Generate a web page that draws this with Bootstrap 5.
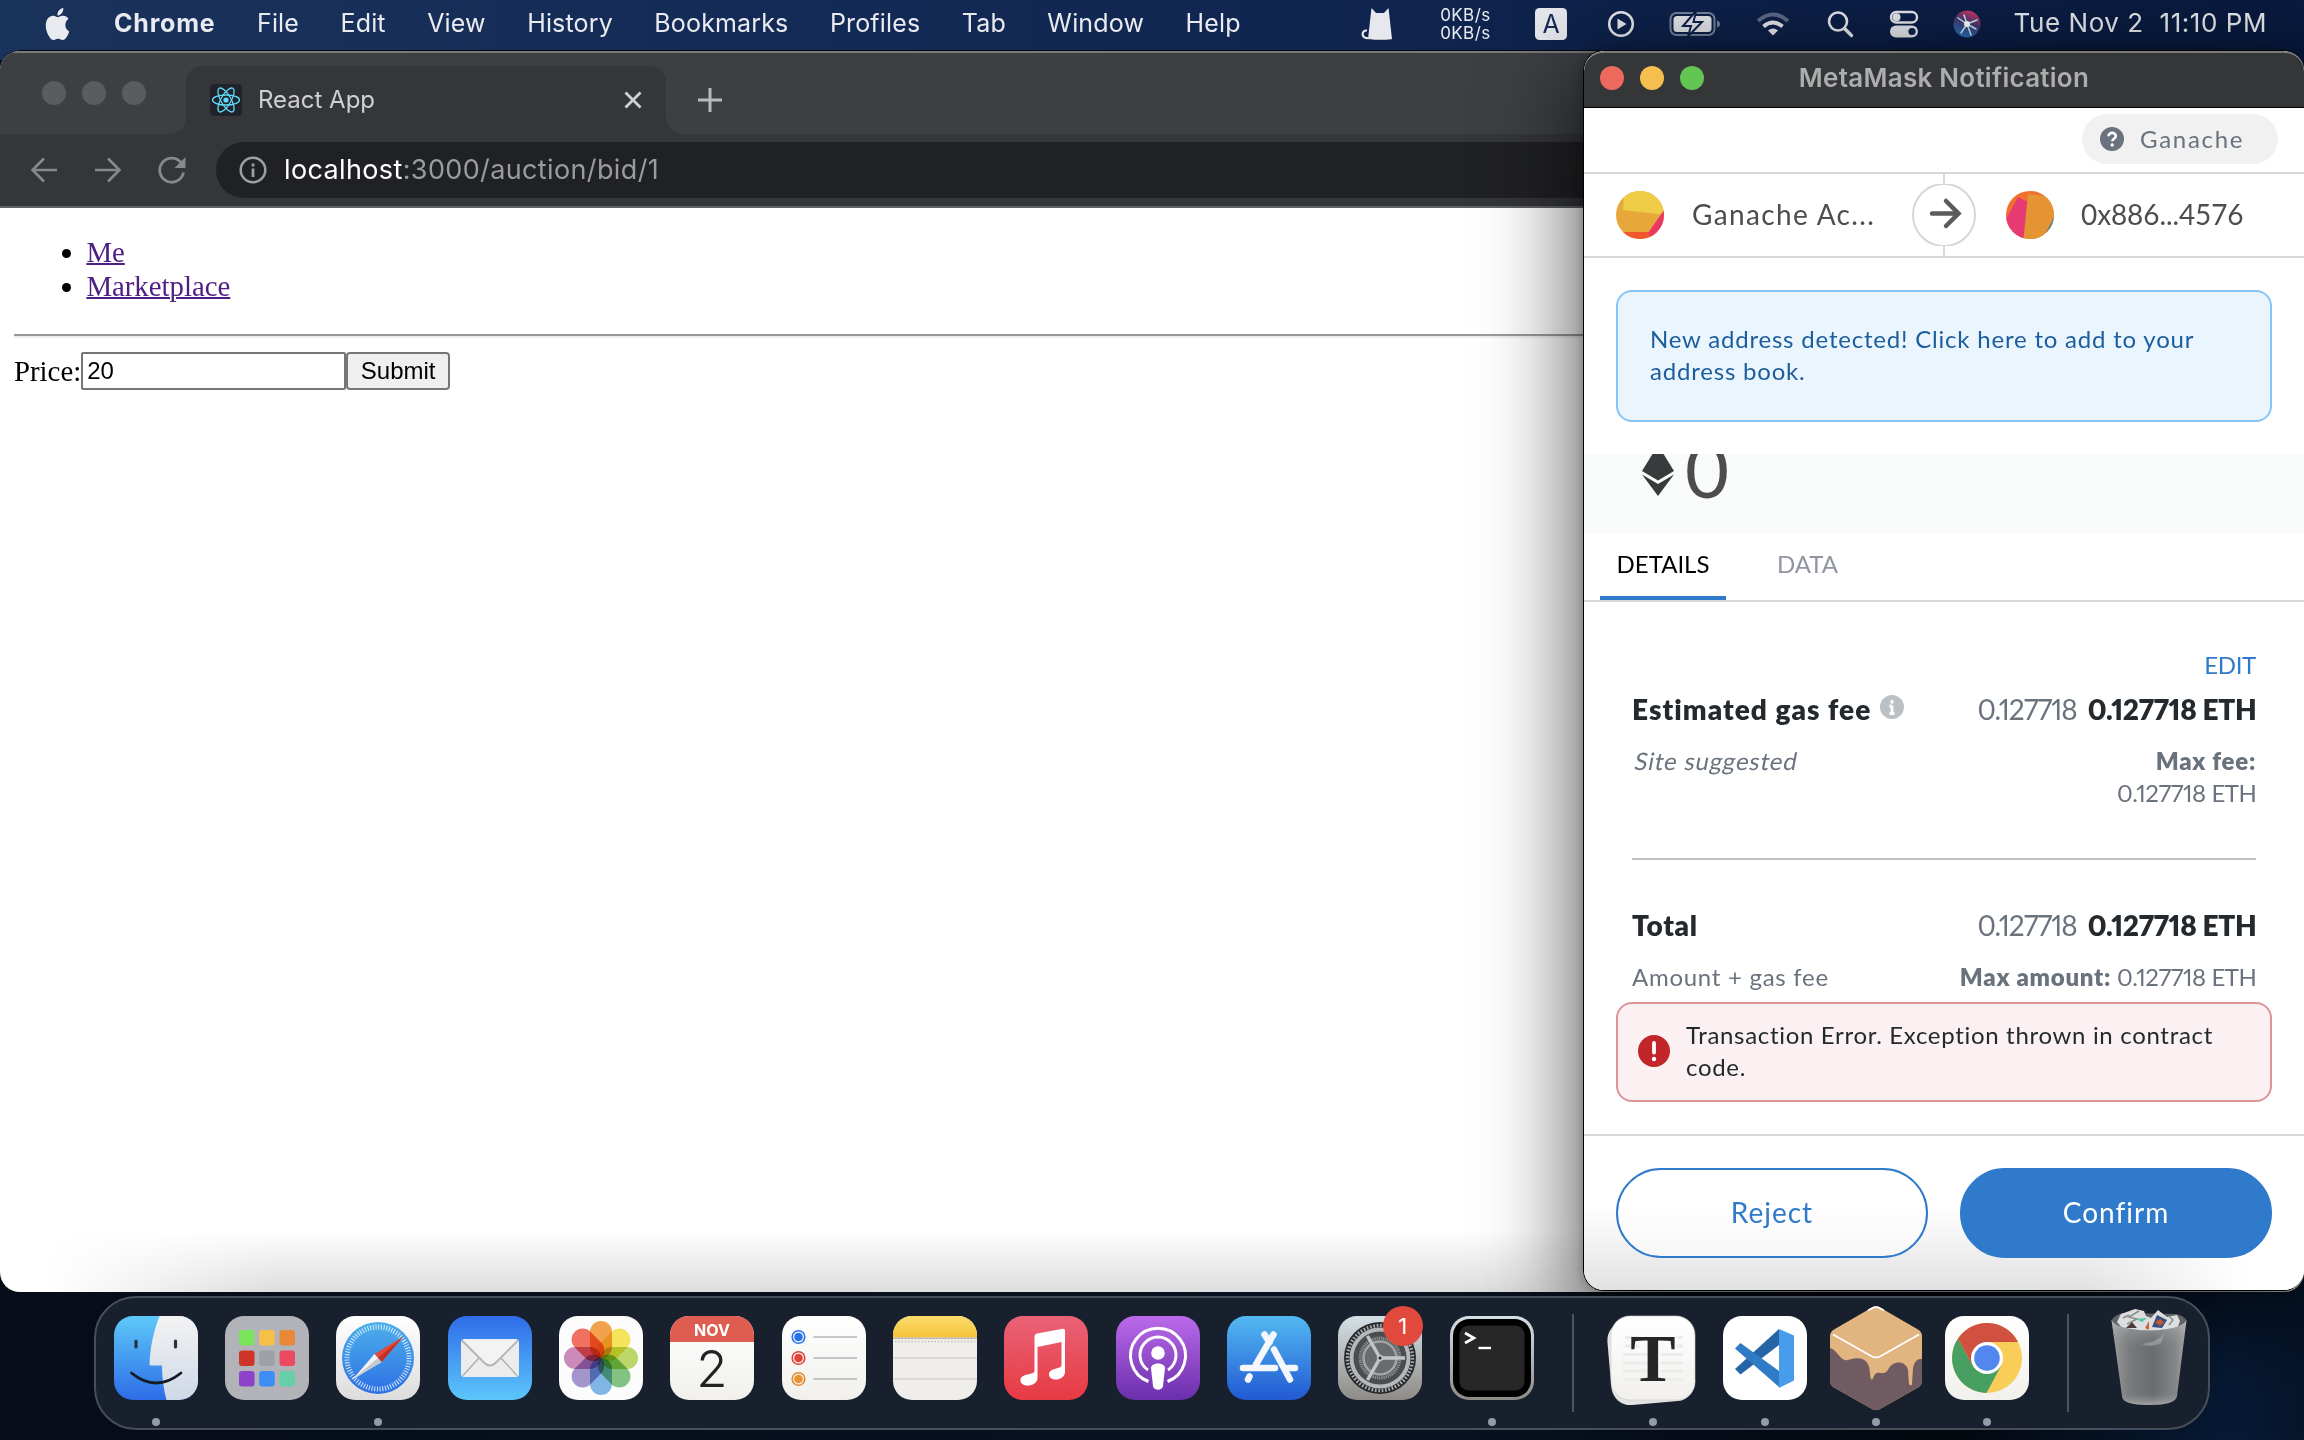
<!DOCTYPE html>
<html lang="en">
<head>
<meta charset="utf-8">
<title>Desktop</title>
<link href="https://cdn.jsdelivr.net/npm/bootstrap@5.3.0/dist/css/bootstrap.min.css" rel="stylesheet">
<style>
html,body{margin:0;height:100%;overflow:hidden}
body{font-family:Inter,"Liberation Sans",sans-serif;background:#06101f}
svg{display:block;flex:none}
.desktop{width:2304px;height:1440px;overflow:hidden;background:linear-gradient(90deg,#060c18 0,#081222 60%,#04080f 85%,#071a35 97%,#06152b 100%)}
.t{white-space:pre}
/* menu bar */
.menubar{height:60px;padding:0 37px 12px 44px;background:linear-gradient(90deg,#1a335b 0,#142b57 30%,#0f254f 60%,#0b1e45 85%,#081a3e 100%);color:#e9ebf0;font-size:25px}
.menus{gap:41.5px;letter-spacing:.15px}
.menus .brand{font-weight:700;letter-spacing:.8px;margin-left:1.500px}
.clock{letter-spacing:.56px;font-size:26px;line-height:36px;padding-bottom:2px}
.netspeed{font-size:17px;line-height:18px;letter-spacing:.4px}
/* windows */
.win{position:absolute}
.browser{left:0;top:50px;width:2304px;height:1242px;border-radius:20px;background:#fff;border-top:1px solid #05080f;overflow:hidden}
.tabstrip{height:83px;background:#3c4043;border-top:2px solid #77797b;padding-left:42px}
.dots{gap:16px}
.dots i{width:24px;height:24px;border-radius:50%;background:#5a5d5f}
.tabx{width:480px;height:68px;background:#35363a;border-radius:16px 16px 0 0;padding:0 24px;color:#cfd0d2;font-size:24px;position:relative}
.tabx::before,.tabx::after{content:"";position:absolute;bottom:0;width:16px;height:16px}
.tabx::before{left:-16px;background:radial-gradient(circle at 0 0,transparent 15.5px,#35363a 16px)}
.tabx::after{right:-16px;background:radial-gradient(circle at 100% 0,transparent 15.5px,#35363a 16px)}
.toolbarx{height:74px;background:#35363a;border-bottom:2px solid #5f6164;padding-left:30px}
.omni{height:56px;border-radius:28px;background:#202124;color:#9a9b9e;font-size:27px;padding-left:23px;letter-spacing:.37px}
.omni b{font-weight:400;color:#fff}
.pagex{font:28.8px/34px "Liberation Serif",serif;color:#000;padding:27px 14px}
.pagex ul{padding-left:72.400px;margin:0 0 31px}
.pagex a{color:#4d1f82;text-decoration:underline;text-decoration-thickness:2px}
.rule{height:4px;border-top:2px solid #9a9a9a;background:#eee}
.pricein{width:265px;height:38px;border:2px solid #767676;border-radius:2px;font:24px "Liberation Sans",sans-serif;padding:0 4px;color:#000;background:#fff}
.submitx{width:104px;height:38px;border:2px solid #767676;border-radius:4px;font:24px "Liberation Sans",sans-serif;padding:0;background:#efefef;color:#000}
.footshade{position:absolute;left:0;right:0;bottom:0;height:62px;background:linear-gradient(#fff0,#0002);-webkit-mask-image:linear-gradient(90deg,transparent 2%,#000 12%,#000 100%)}
/* wallet window */
.wallet{left:1583px;top:50px;width:721px;height:1241px;border-radius:21px;background:#fff;border:1px solid #000;border-right:0;box-shadow:0 26px 90px 10px rgba(0,0,0,.62),0 0 10px rgba(0,0,0,.25);overflow:hidden;font-family:Lato,"Liberation Sans",sans-serif;font-size:24px;line-height:32px;color:#24292e;font-variant-ligatures:none}
.wallet b{font-weight:800}
.wtitle{height:57px;background:#353638;border-top:2px solid #78797a;border-bottom:1px solid #000;color:#acadae;font:600 26px/1 Inter,sans-serif;letter-spacing:.26px;border-radius:20px 20px 0 0;padding-bottom:5px}
.wtitle .dots{left:16px;top:13px;position:absolute}
.line-b{border-bottom:2px solid #d6d9dc}
.netrow{height:66px;padding:6px 26px 0 0}
.pill{height:50px;width:196px;border-radius:25px;background:#f1f1f2;color:#6a737d;padding-left:18px}
.sender{height:84px;font-size:28px;color:#4d4d4d;padding-left:32px}
.newaddr{margin:32px;height:132px;border:2px solid #86c4f8;border-radius:16px;background:#eaf5fe;color:#1c5d9e;padding:31px 32px;letter-spacing:.8px}
.band{height:80px;background:#f9fafa;overflow:hidden;padding-left:58px}
.bignum{font-size:76px;line-height:76px;color:#4d4d4d}
.tabsx{height:68px;padding-left:16px;color:#9095a0}
.tabsx div{height:66px;line-height:60px}
.tabsx .on{width:126px;color:#000;border-bottom:4px solid #2f7acb}
.det{padding:47px 48px 0}
.big{font-size:28px;line-height:40px}
.gray{color:#6a737d}
.blue{color:#2f7acb}
.slant{font-style:normal;display:inline-block;transform:skewX(-11deg);letter-spacing:.75px}
.num{font-variant-numeric:proportional-nums;letter-spacing:-.45px;margin-right:-.45px}
.big .num{letter-spacing:-1.050px;margin-right:-1.050px}
.big b.num{letter-spacing:-.34px;margin-right:-.34px}
.lsb{letter-spacing:1.050px}
.lss{letter-spacing:.72px}
.err{margin:9px 32px 32px;height:100px;border:2px solid #df9298;border-radius:16px;background:#fbf1f2;padding:0 0 2px 20px}
.foot{border-top:2px solid #d6d9dc;height:156px;padding:32px;background:linear-gradient(90deg,#fff0 70%,#fff 92%),linear-gradient(#fff 0,#fff 45%,#e2e2e2 100%)}
.foot .btn{width:312px;height:90px;border-radius:45px;font-size:28px;border:2px solid #2f7acb;line-height:40px;letter-spacing:1px;padding:0 0 2px}
.foot .btn-a{color:#2f7acb;background:#fff8}
.foot .btn-b{color:#fff;background:#2f7acb;margin-left:32px}
/* dock */
.dock{left:94px;top:1296px;width:2116px;height:134px;border-radius:42px;border:2px solid #474e59;background:#18202e;padding-left:4px}
.slot{width:111.33px;padding-top:18px;position:relative}
.slot.run::after{content:"";position:absolute;left:50%;margin-left:-4px;top:120px;width:8px;height:8px;border-radius:50%;background:#949cac}
.sep{width:50.5px}
.sep i{display:block;width:2px;height:98px;margin:16px auto 0;background:#4c5461}
.badgex{position:absolute;left:58px;top:8px;width:40px;height:40px;border-radius:50%;background:#e2493d;color:#fff;font-size:22px;line-height:40px;text-align:center}
</style>
<script src="https://cdn.jsdelivr.net/npm/bootstrap@5.3.0/dist/js/bootstrap.bundle.min.js"></script>
</head>
<body>
<div class="desktop position-relative">
 <div class="menubar d-flex align-items-center justify-content-between">
  <div class="menus d-flex align-items-center">
   <svg width="27" height="32" viewBox="0.5 0 15 16" preserveAspectRatio="none" fill="#e9ebf0"><path d="M11.182.008C11.148-.03 9.923.023 8.857 1.18c-1.066 1.156-.902 2.482-.878 2.516s1.52.087 2.475-1.258.762-2.391.728-2.43m3.314 11.733c-.048-.096-2.325-1.234-2.113-3.422s1.675-2.789 1.698-2.854-.597-.79-1.254-1.157a3.7 3.7 0 0 0-1.563-.434c-.108-.003-.483-.095-1.254.116-.508.139-1.653.589-1.968.607-.316.018-1.256-.522-2.267-.665-.647-.125-1.333.131-1.824.328-.49.196-1.422.754-2.074 2.237-.652 1.482-.311 3.83-.067 4.56s.625 1.924 1.273 2.796c.576.984 1.34 1.667 1.659 1.899s1.219.386 1.843.067c.502-.308 1.408-.485 1.766-.472.357.013 1.061.154 1.782.539.571.197 1.111.115 1.652-.105.541-.221 1.324-1.059 2.238-2.758q.52-1.185.473-1.282"/></svg>
   <span class="t brand">Chrome</span><span class="t">File</span><span class="t">Edit</span><span class="t">View</span><span class="t">History</span><span class="t">Bookmarks</span><span class="t">Profiles</span><span class="t">Tab</span><span class="t">Window</span><span class="t">Help</span>
  </div>
  <div class="d-flex align-items-center">
   <svg width="34" height="34" viewBox="0 0 34 34" fill="#e6e8ed"><path d="M10.500 1L15 6h8l4.500-5 3.500 31c-1 1-22 1-24 0z"/><path d="M7 31C0 32 0 23 6 23.500" fill="none" stroke="#e6e8ed" stroke-width="2.200"/></svg>
   <div class="netspeed" style="margin-left:45px"><div class="t">0KB/s</div><div class="t">0KB/s</div></div>
   <svg style="margin-left:43px" width="34" height="34" viewBox="0 0 34 34"><rect x="1" y="1" width="32" height="32" rx="4.500" fill="#e6e8ed"/><text x="17" y="26" text-anchor="middle" font-family="Inter" font-size="25" fill="#142a55">A</text></svg>
   <svg style="margin-left:38px" width="30" height="30" viewBox="0 0 30 30"><circle cx="15" cy="15" r="11.800" fill="none" stroke="#e6e8ed" stroke-width="2.500"/><path d="M11.500 9.500l9 5.500-9 5.500z" fill="#e6e8ed"/></svg>
   <svg style="margin-left:33px" width="52" height="30" viewBox="0 0 52 30"><rect x="1.500" y="4" width="44" height="22" rx="6" fill="none" stroke="#78839b" stroke-width="2"/><path d="M48 11.500c4 1 4 6 0 7z" fill="#78839b"/><rect x="4.500" y="7" width="38" height="16" rx="3.500" fill="#e6e8ed"/><path d="M26.500 2.500L14 17h8l-3 10.500L33 13h-8.500l2.500-10.500z" fill="#e6e8ed" stroke="#0e224c" stroke-width="2"/></svg>
   <svg style="margin-left:35px" width="34" height="30" viewBox="0 0 34 30" fill="none" stroke-width="4"><path d="M2 12Q17-1 32 12" stroke="#5d6a87"/><path d="M7.500 17.500q9.500-8 19 0" stroke="#e6e8ed"/><path d="M17 26.500l-5-5q5-4 10 0z" fill="#e6e8ed"/></svg>
   <svg style="margin-left:36px" width="28" height="30" viewBox="0 0 28 30" fill="none" stroke="#e6e8ed" stroke-width="2.600"><circle cx="12" cy="12.500" r="9"/><path d="M18.500 19.500l7 7" stroke-width="3.500" stroke-linecap="round"/></svg>
   <svg style="margin-left:35px" width="30" height="30" viewBox="0 0 30 30"><rect x="2" y="3" width="26" height="10.500" rx="5.200" fill="none" stroke="#e6e8ed" stroke-width="2.400"/><circle cx="7.500" cy="8.200" r="4" fill="#e6e8ed"/><rect x="1" y="16.500" width="28" height="12" rx="6" fill="#e6e8ed"/><circle cx="23" cy="22.500" r="3.600" fill="#0e224c"/></svg>
   <svg style="margin-left:34px" width="28" height="28" viewBox="0 0 28 28"><defs><linearGradient id="siri" x1="0.700" x2="0.300" y2="1"><stop offset="0" stop-color="#d5386b"/><stop offset=".45" stop-color="#44356d"/><stop offset="1" stop-color="#2676c0"/></linearGradient></defs><circle cx="14" cy="14" r="13.500" fill="url(#siri)"/><path d="M14 14L5 8M14 14l10-4M14 14l4 11M14 14L8 23M14 14l-3-9M14 14l9 5" stroke="#b9eef5" stroke-width="1.500" stroke-linecap="round"/><circle cx="14" cy="14" r="3" fill="#fff"/></svg>
   <span class="t clock" style="margin-left:33px">Tue Nov 2  11:10 PM</span>
  </div>
 </div>

 <div class="win browser">
  <div class="tabstrip d-flex">
   <div class="dots d-flex" style="padding-top:28px"><i></i><i></i><i></i></div>
   <div class="tabx d-flex align-items-center align-self-end" style="margin-left:40px">
    <svg width="32" height="32" viewBox="0 0 32 32"><rect width="32" height="32" rx="4" fill="#20232a"/><g fill="none" stroke="#61dafb" stroke-width="1.300"><ellipse cx="16" cy="16" rx="13.500" ry="5"/><ellipse cx="16" cy="16" rx="13.500" ry="5" transform="rotate(60 16 16)"/><ellipse cx="16" cy="16" rx="13.500" ry="5" transform="rotate(120 16 16)"/></g><circle cx="16" cy="16" r="2.600" fill="#61dafb"/></svg>
    <span class="t" style="margin-left:16px">React App</span>
    <svg class="ms-auto" width="18" height="18" viewBox="0 0 18 18" stroke="#d0d1d3" stroke-width="2.800"><path d="M1.500 1.500l15 15M16.500 1.500l-15 15"/></svg>
   </div>
   <svg class="align-self-end" style="margin:0 0 22px 32px" width="24" height="24" viewBox="0 0 24 24" stroke="#b9babc" stroke-width="3"><path d="M12 0v24M0 12h24"/></svg>
  </div>
  <div class="toolbarx d-flex align-items-center">
   <svg width="28" height="26" viewBox="0 0 28 26" fill="none" stroke="#87888a" stroke-width="2.600"><path d="M27 13H3M14 1.500L2.500 13 14 24.500"/></svg>
   <svg style="margin-left:36px" width="28" height="26" viewBox="0 0 28 26" fill="none" stroke="#87888a" stroke-width="2.600"><path d="M1 13h24M14 1.500L25.500 13 14 24.500"/></svg>
   <svg style="margin-left:36px" width="28" height="28" viewBox="0 0 28 28" fill="none" stroke="#87888a" stroke-width="2.800"><path d="M25.500 16.500A12 12 0 1 1 22.500 6L25 9"/><path d="M27.500 1v11h-11z" fill="#87888a" stroke="none"/></svg>
   <div class="omni d-flex align-items-center flex-fill" style="margin-left:30px">
    <svg width="28" height="28" viewBox="0 0 28 28"><circle cx="14" cy="14" r="12.300" fill="none" stroke="#9aa0a6" stroke-width="2.500"/><path d="M14 12.500v8.500M14 7.500v3" stroke="#9aa0a6" stroke-width="2.800"/></svg>
    <span class="t" style="margin-left:17px"><b>localhost</b>:3000/auction/bid/1</span>
   </div>
  </div>
  <div class="pagex">
   <ul><li><a href="#">Me</a></li><li><a href="#">Marketplace</a></li></ul>
   <div class="rule"></div>
   <div class="d-flex align-items-center" style="margin-top:14px"><span>Price:</span><input class="pricein" value="20"><button class="submitx">Submit</button></div>
  </div>
  <div class="footshade"></div>
 </div>

 <div class="win wallet">
  <div class="wtitle d-flex align-items-center justify-content-center position-relative">
   <div class="dots d-flex"><i style="background:#ee6a5f"></i><i style="background:#f5bf4f"></i><i style="background:#62c554"></i></div>
   <span class="t">MetaMask Notification</span>
  </div>
  <div class="netrow line-b d-flex justify-content-end">
   <div class="pill d-flex align-items-center">
    <svg width="24" height="24" viewBox="0 0 24 24"><circle cx="12" cy="12" r="12" fill="#6a737d"/><path d="M8.500 9.300c0-4.700 7.300-4.500 7.300-.2 0 2.700-3.500 2.700-3.500 5.200" fill="none" stroke="#fff" stroke-width="2.600"/><circle cx="12.200" cy="18" r="1.700" fill="#fff"/></svg>
    <span class="t" style="margin-left:16px;letter-spacing:1.7px">Ganache</span>
   </div>
  </div>
  <div class="sender line-b d-flex align-items-center">
   <svg width="48" height="48" viewBox="0 0 48 48"><clipPath id="av"><circle cx="24" cy="24" r="24"/></clipPath><g clip-path="url(#av)"><path fill="#e8a73b" d="M0 0h48v48H0z"/><path fill="#eecc45" d="M8 0h40v22l-2 1.500L7 19z"/><path fill="#f0582b" d="M0 41h48v7H0z"/><path fill="#ea3864" d="M48 19L32 42l5 6h11z"/></g></svg>
   <span class="t" style="margin-left:28px;width:220px;padding-bottom:3px;letter-spacing:1.350px">Ganache Ac...</span>
   <div class="d-flex flex-column align-items-center" style="height:82px"><i style="width:2px;height:10px;background:#d6d9dc"></i>
    <svg width="64" height="62" viewBox="0 1 64 62"><circle cx="32" cy="32" r="31" fill="#fff" stroke="#d2d7db" stroke-width="2"/><path d="M20 30.500h26M34 18l12.500 12.500L34 43" fill="none" stroke="#5b5b5b" stroke-width="4.500" stroke-linecap="round"/></svg>
    <i style="width:2px;height:10px;background:#d6d9dc"></i></div>
   <svg style="margin-left:30px" width="48" height="48" viewBox="0 0 48 48"><g clip-path="url(#av)"><path fill="#f07030" d="M0 0h48v48H0z"/><path fill="#e83a72" d="M12 6l10 5-4 37H0V28z"/><path fill="#e59434" d="M22 3l26 3v20L36 48H17.500z"/><path fill="#4a9180" d="M48 26v16h-8z"/></g></svg>
   <span class="t" style="margin-left:27px;padding-bottom:3px;letter-spacing:-.1px">0x886...4576</span>
  </div>
  <div class="newaddr"><span class="t">New address detected! Click here to add to your<br>address book.</span></div>
  <div class="band d-flex align-items-start">
   <svg width="32" height="42" viewBox="0 0 32 42" fill="#383a3c"><path d="M10.500 0h11L32 17 16 26.500 0 17z"/><path d="M0 20.500L16 30l16-9.500L16 42z"/></svg>
   <span class="bignum" style="margin:-23px 0 0 11px">0</span>
  </div>
  <div class="tabsx line-b d-flex"><div class="on text-center"><span class="t">DETAILS</span></div><div style="margin-left:51px"><span class="t">DATA</span></div></div>
  <div class="det">
   <div class="text-end blue"><span class="t" style="letter-spacing:-.3px">EDIT</span></div>
   <div class="big d-flex align-items-center" style="margin-top:8px"><b class="t lsb">Estimated gas fee</b>
    <svg style="margin:0 0 4px 9px" width="24" height="24" viewBox="0 0 24 24"><circle cx="12" cy="12" r="12" fill="#bbc0c5"/><path d="M12 10.500V19M12 5v3.500M9.500 18.500h5M9.500 11h2" stroke="#fff" stroke-width="2.800"/></svg>
    <span class="gray t ms-auto num">0.127718</span><b class="t num" style="margin-left:12px">0.127718 ETH</b></div>
   <div class="d-flex justify-content-between gray" style="margin-top:16px"><i class="t slant">Site suggested</i><div class="text-end"><b class="t lss">Max fee:</b><br><span class="t num">0.127718 ETH</span></div></div>
   <div style="height:2px;background:#bbc0c5;margin-top:49px"></div>
   <div class="big d-flex" style="margin-top:45px"><b class="t lss">Total</b><span class="gray t ms-auto num">0.127718</span><b class="t num" style="margin-left:12px">0.127718 ETH</b></div>
   <div class="d-flex gray" style="margin-top:16px"><span class="t lss">Amount + gas fee</span><b class="t ms-auto lss">Max amount:</b><span class="t num" style="margin-left:6px">0.127718 ETH</span></div>
  </div>
  <div class="err d-flex align-items-center">
   <svg width="32" height="32" viewBox="0 0 32 32"><circle cx="16" cy="16" r="16" fill="#c3262a"/><path d="M16 8v9.500" stroke="#fff" stroke-width="3.800" stroke-linecap="round"/><circle cx="16" cy="24" r="2.200" fill="#fff"/></svg>
   <div style="margin-left:16px;letter-spacing:.68px"><span class="t">Transaction Error. Exception thrown in contract</span><br>code.</div>
  </div>
  <div class="foot d-flex"><button class="btn btn-a"><span class="t">Reject</span></button><button class="btn btn-b"><span class="t">Confirm</span></button></div>
 </div>

 <div class="win dock d-flex">
  <svg width="0" height="0" class="position-absolute"><defs>
   <linearGradient id="gBlue" x2="0" y2="1"><stop offset="0" stop-color="#5ec9f8"/><stop offset="1" stop-color="#2d6ce8"/></linearGradient>
   <linearGradient id="gMail" x2="0" y2="1"><stop offset="0" stop-color="#2f6ce9"/><stop offset="1" stop-color="#5cc6fa"/></linearGradient>
   <linearGradient id="gStore" x2="0" y2="1"><stop offset="0" stop-color="#53b9f1"/><stop offset="1" stop-color="#2159d3"/></linearGradient>
   <linearGradient id="gWhite" x2="0" y2="1"><stop offset="0" stop-color="#fff"/><stop offset="1" stop-color="#dcdcdc"/></linearGradient>
   <linearGradient id="gFace" x2="0" y2="1"><stop offset="0" stop-color="#f3f3f3"/><stop offset="1" stop-color="#cfd8e6"/></linearGradient>
   <linearGradient id="gPaper" x2="0" y2="1"><stop offset="0" stop-color="#fff"/><stop offset="1" stop-color="#f1f0ec"/></linearGradient>
   <linearGradient id="gSafari" x2="0" y2="1"><stop offset="0" stop-color="#4cb0ea"/><stop offset="1" stop-color="#2e6fe4"/></linearGradient>
   <linearGradient id="gYellow" x2="0" y2="1"><stop offset="0" stop-color="#fbdc6c"/><stop offset="1" stop-color="#f6c23a"/></linearGradient>
   <linearGradient id="gMusic" x2="0" y2="1"><stop offset="0" stop-color="#ea6277"/><stop offset="1" stop-color="#e73a42"/></linearGradient>
   <linearGradient id="gPod" x2="0" y2="1"><stop offset="0" stop-color="#bb6aea"/><stop offset="1" stop-color="#6a2fab"/></linearGradient>
   <linearGradient id="gSet" x2="0" y2="1"><stop offset="0" stop-color="#d5e0e6"/><stop offset="1" stop-color="#8e8b87"/></linearGradient>
   <linearGradient id="gTrash"><stop offset="0" stop-color="#9b9d9e"/><stop offset=".25" stop-color="#77797b"/><stop offset=".55" stop-color="#696c6e"/><stop offset=".85" stop-color="#838587"/><stop offset="1" stop-color="#a4a6a7"/></linearGradient>
   <linearGradient id="gTrashLo" x2="0" y2="1"><stop offset="0" stop-color="#c6c8c9" stop-opacity=".55"/><stop offset=".35" stop-color="#888" stop-opacity="0"/><stop offset=".85" stop-color="#888" stop-opacity="0"/><stop offset="1" stop-color="#c6c8c9" stop-opacity=".6"/></linearGradient>
   <clipPath id="sq"><rect width="84" height="84" rx="19"/></clipPath>
  </defs></svg>

  <div class="slot run"><svg class="mx-auto" width="84" height="84" viewBox="0 0 84 84"><g clip-path="url(#sq)"><path fill="url(#gBlue)" d="M0 0h84v84H0z"/><path fill="url(#gFace)" d="M45.500 0C39 17 36 33 35.500 48.500q0 1 1 1H48Q48 68 52.500 84H84V0z"/></g><path d="M22 25v6M61.500 25v6" stroke="#2a3440" stroke-width="3.200" stroke-linecap="round"/><path d="M17.500 57Q42 77 67 57" fill="none" stroke="#141a22" stroke-width="2.800" stroke-linecap="round"/></svg></div>
  <div class="slot"><svg class="mx-auto" width="84" height="84" viewBox="0 0 84 84"><rect width="84" height="84" rx="19" fill="#b1b3b9"/><g><rect x="14" y="14" width="15.500" height="15.500" rx="3" fill="#7be35b"/><rect x="34.200" y="14" width="15.500" height="15.500" rx="3" fill="#f6bf45"/><rect x="54.500" y="14" width="15.500" height="15.500" rx="3" fill="#e98837"/><rect x="14" y="34.500" width="15.500" height="15.500" rx="3" fill="#cf3428"/><rect x="34.200" y="34.500" width="15.500" height="15.500" rx="3" fill="#9ba1a6"/><rect x="54.500" y="34.500" width="15.500" height="15.500" rx="3" fill="#ec4a60"/><rect x="14" y="55" width="15.500" height="15.500" rx="3" fill="#8d42c9"/><rect x="34.200" y="55" width="15.500" height="15.500" rx="3" fill="#3a8ef5"/><rect x="54.500" y="55" width="15.500" height="15.500" rx="3" fill="#67cfa8"/></g></svg></div>
  <div class="slot run"><svg class="mx-auto" width="84" height="84" viewBox="0 0 84 84"><rect width="84" height="84" rx="19" fill="url(#gWhite)"/><circle cx="42" cy="42" r="36" fill="url(#gSafari)"/><circle cx="42" cy="42" r="31" fill="none" stroke="#d9ecfb" stroke-width="5" stroke-dasharray="1 1.705"/><path d="M67.500 20.500L38.500 38l7 8z" fill="#e5473a"/><path d="M16.500 63.500L38.500 38l7 8z" fill="#f2f3f5"/><path d="M67.500 20.500L42 42l3.500 4z" fill="#c03227"/><path d="M16.500 63.500L42 42l3.500 4z" fill="#c5c9ce"/></svg></div>
  <div class="slot"><svg class="mx-auto" width="84" height="84" viewBox="0 0 84 84"><rect width="84" height="84" rx="19" fill="url(#gMail)"/><rect x="13" y="23" width="58" height="38" rx="3.500" fill="#ececec"/><path d="M15 59.500L31 42M69 59.500L53 42" stroke="#aaa" stroke-width="1.300"/><path d="M14 24.500L36 46.500q6 6 12 0L70 24.500" fill="#f3f3f3" stroke="#b3b3b3" stroke-width="1.800"/></svg></div>
  <div class="slot"><svg class="mx-auto" width="84" height="84" viewBox="0 0 84 84"><rect width="84" height="84" rx="19" fill="#fcfcfc"/><g style="isolation:isolate" fill-opacity=".9"><g><rect x="31" y="5" width="22" height="37" rx="11" fill="#f1983a" style="mix-blend-mode:multiply"/><rect x="31" y="5" width="22" height="37" rx="11" fill="#f4e04a" transform="rotate(45 42 42)" style="mix-blend-mode:multiply"/><rect x="31" y="5" width="22" height="37" rx="11" fill="#b5d25a" transform="rotate(90 42 42)" style="mix-blend-mode:multiply"/><rect x="31" y="5" width="22" height="37" rx="11" fill="#76bb76" transform="rotate(135 42 42)" style="mix-blend-mode:multiply"/><rect x="31" y="5" width="22" height="37" rx="11" fill="#72aee0" transform="rotate(180 42 42)" style="mix-blend-mode:multiply"/><rect x="31" y="5" width="22" height="37" rx="11" fill="#9a8ac8" transform="rotate(225 42 42)" style="mix-blend-mode:multiply"/><rect x="31" y="5" width="22" height="37" rx="11" fill="#c77db2" transform="rotate(270 42 42)" style="mix-blend-mode:multiply"/><rect x="31" y="5" width="22" height="37" rx="11" fill="#ee6150" transform="rotate(315 42 42)" style="mix-blend-mode:multiply"/></g></g></svg></div>
  <div class="slot"><svg class="mx-auto" width="84" height="84" viewBox="0 0 84 84"><g clip-path="url(#sq)"><path fill="url(#gPaper)" d="M0 0h84v84H0z"/><path fill="#df5c50" d="M0 0h84v26H0z"/></g><text x="42" y="19.500" text-anchor="middle" font-family="Inter" font-weight="700" font-size="16" fill="#fff">NOV</text><text x="42" y="71" text-anchor="middle" font-family="Inter" font-weight="300" font-size="51" fill="#222">2</text></svg></div>
  <div class="slot"><svg class="mx-auto" width="84" height="84" viewBox="0 0 84 84"><rect width="84" height="84" rx="19" fill="url(#gPaper)"/><path d="M31.500 21h43.500M31.500 42h43.500M31.500 63h43.500" stroke="#b4b4b6" stroke-width="1.600"/><g fill="none" stroke-width="1.600"><circle cx="16.500" cy="21" r="6.300" stroke="#2a72ea"/><circle cx="16.500" cy="42" r="6.300" stroke="#e0453a"/><circle cx="16.500" cy="63" r="6.300" stroke="#e08d2e"/></g><circle cx="16.500" cy="21" r="4.300" fill="#2a72ea"/><circle cx="16.500" cy="42" r="4.300" fill="#e0453a"/><circle cx="16.500" cy="63" r="4.300" fill="#e9922e"/></svg></div>
  <div class="slot"><svg class="mx-auto" width="84" height="84" viewBox="0 0 84 84"><g clip-path="url(#sq)"><path fill="#efeeeb" d="M0 0h84v84H0z"/><path fill="url(#gYellow)" d="M0 0h84v21.500H0z"/></g><path d="M0 22.300h84" stroke="#bdb9ad" stroke-width="1.600"/><path d="M2 25.500h80" stroke="#bbb" stroke-width="1.300" stroke-dasharray="1.300 2"/><path d="M0 42h84M0 63h84" stroke="#d3d2cf" stroke-width="1.500"/></svg></div>
  <div class="slot"><svg class="mx-auto" width="84" height="84" viewBox="0 0 84 84"><rect width="84" height="84" rx="19" fill="url(#gMusic)"/><path d="M30.500 20.500Q30.500 18 33 17.500L59 12.800Q61 12.500 61 14.500V56c0 9-16 10-16 2.500 0-7 12.500-5 12.500-9.500V26L33.500 31v31c0 9-17 10-17 2.500 0-8 14-5 14-9.500z" fill="#fff"/></svg></div>
  <div class="slot"><svg class="mx-auto" width="84" height="84" viewBox="0 0 84 84"><rect width="84" height="84" rx="19" fill="url(#gPod)"/><g fill="none" stroke="#fff" stroke-width="3"><path d="M32.500 65.500A27.500 27.500 0 1 1 51.500 65.500"/><path d="M32 54A18 18 0 1 1 52 54"/></g><circle cx="42" cy="37" r="6.800" fill="#fff"/><path d="M35 52c0-6 14-6 14 0l-2 18c-.7 5-9.300 5-10 0z" fill="#fff"/></svg></div>
  <div class="slot"><svg class="mx-auto" width="84" height="84" viewBox="0 0 84 84"><rect width="84" height="84" rx="19" fill="url(#gStore)"/><g stroke="#f4f7fc" stroke-width="6.500" stroke-linecap="round"><path d="M46.500 18.500L29 48.500M22.500 60.500l-1.500 3M37.500 18.500l5 8M47 33.500l16 30M16 52h32M61 52h7"/></g></svg></div>
  <div class="slot"><svg class="mx-auto" width="84" height="84" viewBox="0 0 84 84"><rect width="84" height="84" rx="19" fill="url(#gSet)"/><circle cx="42" cy="42" r="36" fill="#26282a"/><circle cx="42" cy="42" r="32.500" fill="none" stroke="#a9acae" stroke-width="3.500" stroke-dasharray="1.700 1.700"/><circle cx="42" cy="42" r="28.500" fill="#4a4c4e" stroke="#b5b8ba" stroke-width="4"/><circle cx="42" cy="42" r="20" fill="#58595b" stroke="#8f9294" stroke-width="3" stroke-dasharray="1.200 1"/><circle cx="42" cy="42" r="16.500" fill="#6a6b6c" stroke="#a2a4a6" stroke-width="2.500"/><path d="M42 42h25M42 42L29.500 20M42 42L29.500 64" stroke="#c3c6c8" stroke-width="3.500"/><circle cx="42" cy="42" r="3.200" fill="#c3c6c8"/><circle cx="42" cy="42" r="1.500" fill="#222"/></svg><div class="badgex">1</div></div>
  <div class="slot run"><svg class="mx-auto" width="84" height="84" viewBox="0 0 84 84"><rect width="84" height="84" rx="19" fill="url(#gSet)"/><rect x="3" y="3" width="78" height="78" rx="16.500" fill="#000"/><rect x="9.500" y="9.500" width="65" height="65" rx="9" fill="#272728"/><path d="M15 17l9 5-9 5" fill="none" stroke="#fff" stroke-width="2.600"/><path d="M28.500 32h12.500" stroke="#fff" stroke-width="2.400"/></svg></div>
  <div class="sep"><i></i></div>
  <div class="slot run"><svg class="mx-auto overflow-visible" width="84" height="84" viewBox="0 0 84 84"><rect x="-2" y="3" width="84" height="84" rx="19" fill="#e4e4e4" transform="rotate(-5 42 42)"/><rect width="84" height="84" rx="19" fill="url(#gPaper)" stroke="#ccc" stroke-width=".6"/><path d="M14 21.500h14M14 30h14M12 38.500h24M12 47h24M12 55h24M12 63.500h24M66 21.500h6M66 30h6M50 38.500h22M50 47h22M50 55h22M50 63.500h22" stroke="#ececec" stroke-width="3"/><text x="42" y="65" text-anchor="middle" font-family="Liberation Serif" font-weight="700" font-size="68" fill="#262626">T</text></svg></div>
  <div class="slot run"><svg class="mx-auto" width="84" height="84" viewBox="0 0 84 84"><rect width="84" height="84" rx="19" fill="#fff"/><path d="M12 53l5.500 5.500L56 29V13z" fill="#2565a7"/><path d="M17.500 27L12 32.500 56 71V55z" fill="#2f7bc6"/><path d="M56 13l15 6.500v45L56 72z" fill="#479ceb"/></svg></div>
  <div class="slot run"><svg class="mx-auto overflow-visible" width="92" height="104" viewBox="0 0 92 104" style="margin-top:-10px"><clipPath id="hex"><path d="M42 1.500q4-2.500 8 0L88 23.500q4 2.500 4 6.500v45q0 4-4 6.500L50 103q-4 2.500-8 0L4 81.500Q0 79 0 75V30q0-4 4-6.500z"/></clipPath><g clip-path="url(#hex)"><path fill="#e2b47f" d="M0 0h92v104H0z"/><path fill="#6f5b61" d="M0 42c8 2 10 14 18 12 12-4 22-2 22 14q1 10 4 2c4-7 9 1 14-6 4-10 18-10 20 0l1 14q2 3 3 0l1-16q2-10 9-9v53H0z"/></g><path d="M3 28.500L42 50.500q4 2 8 0L89 28.500" fill="none" stroke="#fff" stroke-width="1.800"/><path d="M38 4.500l4-2.300q4-2 8 0l4 2.300" fill="none" stroke="#fff" stroke-width="1.800"/></svg></div>
  <div class="slot run"><svg class="mx-auto" width="84" height="84" viewBox="0 0 84 84"><rect width="84" height="84" rx="19" fill="url(#gPaper)"/><g transform="translate(42 42)"><circle r="35" fill="#f8ce58"/><path d="M-29-19.500A35 35 0 0 0-.5 35L14 8-14 8z" fill="#479f61"/><path d="M-29-19.500L-14 8 0 0V-16H31L28-21A35 35 0 0 0-29-19.500z" fill="#d0513f"/><circle r="16" fill="#fff"/><circle r="12.800" fill="#5187ee"/></g></svg></div>
  <div class="sep"><i></i></div>
  <div class="slot"><svg class="mx-auto overflow-visible" width="76" height="98" viewBox="0 0 76 98" style="margin-top:-8px"><path d="M.5 12q5-6 12-7l52 1q7 1 11 6-2 11-37 12T.500 12z" fill="#606365"/><path d="M6 14L10 6l14-5 9 2 2 5 5 2 7-8 9 7 10-2 3 6-3 8-26 4-26-2z" fill="#dddedf"/><path d="M16 16l10-5-8-2 10-6M58 8l4 4-4 5M12 10l6-3" fill="none" stroke="#8b8d8e" stroke-width="1.500"/><path d="M15 20l6-6 5 6z" fill="#4a3a38"/><path d="M25 11l11-1-5 4z" fill="#4fc8a0"/><path d="M34 20l4-7v9z" fill="#d0603a"/><path d="M41 19l5-12 10 5-5 8z" fill="#38507c"/><path d="M44 14l5-3 4 3-4 4z" fill="#c8582e"/><path d="M.5 12c6 14 69 14 75 0L66 88q-1 9-28 9T11 88z" fill="url(#gTrash)"/><path d="M.5 12c6 14 69 14 75 0L66 88q-1 9-28 9T11 88z" fill="url(#gTrashLo)"/><path d="M30 36q18-2 24-12l-4 11q-9 5-20 1z" fill="#b4b6b7" opacity=".5"/></svg></div>
 </div>
</div>
</body>
</html>
